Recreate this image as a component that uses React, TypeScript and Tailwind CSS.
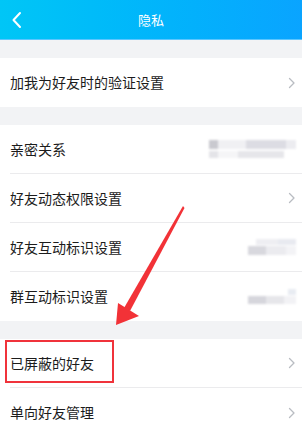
import React from 'react';

const Chevron = () => (
  <svg width="8" height="12" viewBox="0 0 8 12" className="shrink-0">
    <path d="M1.5 1.5 L6 6 L1.5 10.5" fill="none" stroke="#b9bcc2" strokeWidth="1.3" strokeLinecap="round" strokeLinejoin="round" />
  </svg>
);

const Blur = ({ variant }: { variant: number }) => {
  if (variant === 1) {
    return (
      <div className="flex flex-col gap-[2px] blur-[1px] mr-0">
        <div className="flex">
          <div className="w-[9px] h-[9px] bg-[#c9c9cf]" />
          <div className="w-[28px] h-[9px] bg-[#f0f0f3]" />
          <div className="w-[40px] h-[9px] bg-[#dcdce3]" />
          <div className="w-[10px] h-[9px] bg-[#ececf0]" />
        </div>
        <div className="flex">
          <div className="w-[9px] h-[7px] bg-[#e4e4e8]" />
          <div className="w-[20px] h-[7px] bg-[#f5f5f7]" />
          <div className="w-[46px] h-[7px] bg-[#e6e6ea]" />
        </div>
      </div>
    );
  }
  if (variant === 2) {
    return (
      <div className="flex flex-col gap-[1px] blur-[1px] mr-0">
        <div className="flex justify-end">
          <div className="w-[22px] h-[6px] bg-[#eeeef2]" />
          <div className="w-[18px] h-[6px] bg-[#e8eaf0]" />
        </div>
        <div className="flex">
          <div className="w-[18px] h-[9px] bg-[#d8d8de]" />
          <div className="w-[20px] h-[9px] bg-[#ebebef]" />
          <div className="w-[10px] h-[9px] bg-[#f3f3f6]" />
        </div>
      </div>
    );
  }
  return (
    <div className="flex flex-col gap-[1px] blur-[1px] mr-0">
      <div className="flex justify-end">
        <div className="w-[8px] h-[6px] bg-[#e8ecf2]" />
      </div>
      <div className="flex">
        <div className="w-[18px] h-[8px] bg-[#d6d6dc]" />
        <div className="w-[18px] h-[8px] bg-[#e6e6ea]" />
        <div className="w-[12px] h-[8px] bg-[#f2f2f5]" />
      </div>
    </div>
  );
};

type Row = { label: string; right: 'chevron' | 1 | 2 | 3; boxed?: boolean };

const Section = ({ rows }: { rows: Row[] }) => (
  <div className="bg-white">
    {rows.map((r, i) => (
      <div key={r.label} className="pl-[10px]">
        <div
          className={`h-[49px] flex items-center justify-between pr-[6px] ${
            i < rows.length - 1 ? 'border-b border-[#ebebed]' : ''
          }`}
        >
          <span className="relative text-[14px] text-[#1c1c1c]">
            {r.label}
            {r.boxed && (
              <span className="absolute -left-[5px] -top-[13px] w-[109px] h-[43px] border-2 border-[#f0333b]" />
            )}
          </span>
          {r.right === 'chevron' ? <Chevron /> : <Blur variant={r.right} />}
        </div>
      </div>
    ))}
  </div>
);

export default function App() {
  return (
    <div
      className="relative w-[302px] h-[432px] overflow-hidden bg-[#f2f3f5]"
      style={{ fontFamily: '"Noto Sans CJK SC", "Noto Sans", sans-serif' }}
    >
      <div className="h-[40px] bg-gradient-to-r from-[#00c6f6] to-[#0aa4ff] border-b border-[#5cc6ff] flex items-center relative">
        <svg width="12" height="18" viewBox="0 0 12 18" className="ml-[11px]">
          <path d="M9 2 L2.5 9 L9 16" fill="none" stroke="#ffffff" strokeWidth="2" strokeLinecap="round" strokeLinejoin="round" />
        </svg>
        <span className="absolute left-0 right-0 text-center text-[13px] text-white pointer-events-none">隐私</span>
      </div>

      <div className="flex flex-col gap-[18px] pt-[18px]">
        <Section rows={[{ label: '加我为好友时的验证设置', right: 'chevron' }]} />
        <Section
          rows={[
            { label: '亲密关系', right: 1 },
            { label: '好友动态权限设置', right: 'chevron' },
            { label: '好友互动标识设置', right: 2 },
            { label: '群互动标识设置', right: 3 },
          ]}
        />
        <Section
          rows={[
            { label: '已屏蔽的好友', right: 'chevron', boxed: true },
            { label: '单向好友管理', right: 'chevron' },
          ]}
        />
      </div>

      <svg className="absolute left-0 top-0 pointer-events-none" width="302" height="432" viewBox="0 0 302 432">
        <polygon points="183,206 184.5,208 130,311 124,308" fill="#f23237" />
        <polygon points="116,325 118,303 139,316" fill="#f23237" />
      </svg>
    </div>
  );
}
